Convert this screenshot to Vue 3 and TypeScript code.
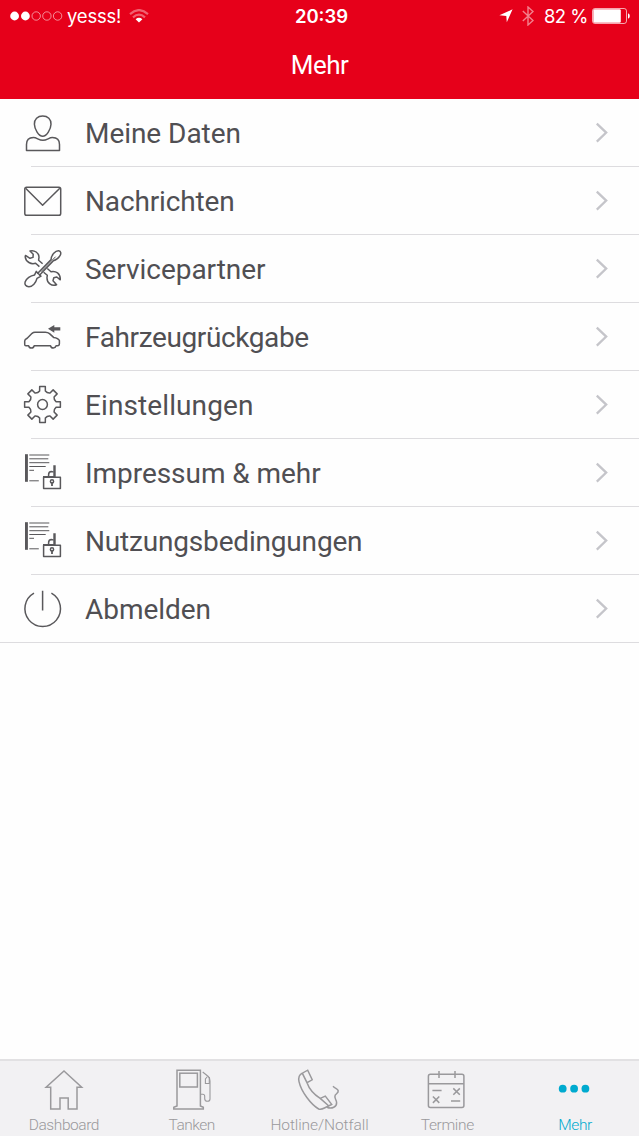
<script setup lang="ts">
interface MenuItem {
  label: string
  icon: 'user' | 'mail' | 'tools' | 'car' | 'gear' | 'legal' | 'power'
  tracking: number
}

interface Tab {
  label: string
  icon: 'home' | 'fuel' | 'phone' | 'calendar' | 'more'
  tracking: number
  active?: boolean
}

const items: MenuItem[] = [
  { label: 'Meine Daten', icon: 'user', tracking: -0.05 },
  { label: 'Nachrichten', icon: 'mail', tracking: -0.15 },
  { label: 'Servicepartner', icon: 'tools', tracking: -0.05 },
  { label: 'Fahrzeugrückgabe', icon: 'car', tracking: -0.38 },
  { label: 'Einstellungen', icon: 'gear', tracking: 0.1 },
  { label: 'Impressum & mehr', icon: 'legal', tracking: -0.05 },
  { label: 'Nutzungsbedingungen', icon: 'legal', tracking: -0.18 },
  { label: 'Abmelden', icon: 'power', tracking: -0.05 },
]

const tabs: Tab[] = [
  { label: 'Dashboard', icon: 'home', tracking: -0.42 },
  { label: 'Tanken', icon: 'fuel', tracking: -0.5 },
  { label: 'Hotline/Notfall', icon: 'phone', tracking: -0.08 },
  { label: 'Termine', icon: 'calendar', tracking: -0.35 },
  { label: 'Mehr', icon: 'more', tracking: -0.4, active: true },
]

// Eight-toothed gear outline around (18.5, 18.5)
const gearPath = (() => {
  const c = 18.5
  const pt = (r: number, deg: number) => {
    const a = (deg * Math.PI) / 180
    return `${(c + r * Math.cos(a)).toFixed(2)} ${(c + r * Math.sin(a)).toFixed(2)}`
  }
  let d = ''
  for (let i = 0; i < 8; i++) {
    const m = i * 45
    d += `${i ? 'L' : 'M'}${pt(13.8, m - 12)}L${pt(18.1, m - 9)}L${pt(18.1, m + 9)}L${pt(13.8, m + 12)}Q${pt(12.2, m + 22.5)} ${pt(13.8, m + 33)}`
  }
  return d + 'Z'
})()
</script>

<template>
  <div class="screen">
    <header class="header">
      <div class="status">
        <div class="status-left">
          <svg class="signal" width="54" height="12" viewBox="0 0 54 12">
            <circle cx="4.6" cy="6" r="4.4" fill="#fff" />
            <circle cx="15.4" cy="6" r="4.4" fill="#fff" />
            <g fill="none" stroke="#fff" stroke-opacity=".6" stroke-width=".9">
              <circle cx="26.2" cy="6" r="4.2" />
              <circle cx="36.9" cy="6" r="4.2" />
              <circle cx="47.6" cy="6" r="4.2" />
            </g>
          </svg>
          <span class="carrier">yesss!</span>
          <svg class="wifi" width="20" height="14" viewBox="0 0 20 14" fill="none">
            <path d="M1 5.1Q10 -3 19 5.1" stroke="#fff" stroke-opacity=".38" stroke-width="2.1" />
            <path d="M4 8.4Q10 3 16 8.4" stroke="#fff" stroke-opacity=".38" stroke-width="2.1" />
            <path d="M6.6 10.2Q10 7.4 13.4 10.2L10 13.6Z" fill="#fff" />
          </svg>
        </div>
        <div class="clock">20:39</div>
        <div class="status-right">
          <svg class="arrow" width="14" height="14" viewBox="0 0 14 14">
            <path d="M13.6 .3L7.8 13.2L7.3 6.9L.4 6.3Z" fill="#fff" />
          </svg>
          <svg class="bluetooth" width="12" height="20" viewBox="0 0 12 20">
            <path d="M.8 5.1L11 14.5L6 19V1L11 5.5L.8 14.9" fill="none" stroke="#fff" stroke-opacity=".5" stroke-width="1.4" />
          </svg>
          <span class="percent">82 %</span>
          <svg class="battery" width="38" height="16" viewBox="0 0 38 16">
            <rect x=".5" y=".5" width="34" height="15" rx="2.4" fill="none" stroke="#fff" stroke-opacity=".65" />
            <rect x="1.3" y="1.3" width="27.5" height="13.4" rx="1.2" fill="#fff" />
            <path d="M36 5.3Q37.8 6 37.8 8T36 10.7Z" fill="#fff" />
          </svg>
        </div>
      </div>
      <h1 class="title">Mehr</h1>
    </header>

    <main class="content">
      <ul class="menu">
        <li v-for="item in items" :key="item.label" class="row">
          <svg class="row-icon" width="38" height="38" viewBox="0 0 38 38">
            <g v-if="item.icon === 'user'">
              <path d="M18.7 2C23.8 2 27.2 5.3 27 10.2C26.8 15.2 22.8 22.3 18.7 22.3C14.6 22.3 10.6 15.2 10.4 10.2C10.2 5.3 13.6 2 18.7 2Z" />
              <path d="M2.5 36.6V30.5C2.5 26 5 23.5 9.4 23.5C13 23.5 14.6 26.3 18.9 26.3C23.2 26.3 24.8 23.5 28.4 23.5C32.8 23.5 35.5 26 35.5 30.5V36.6Z" />
            </g>
            <g v-else-if="item.icon === 'mail'">
              <rect x=".8" y="5.3" width="35.9" height="28" rx="1.8" />
              <path d="M1.6 6.2L18.6 23.2L35.8 6.2" />
            </g>
            <g v-else-if="item.icon === 'tools'">
              <path d="M15.4 16.6L11.6 13.2C7 14.7 1.9 12 1.2 6.8L1.5 5.4L6 8.3L9 7.4L9.2 4.3L6 1C10.5-.4 14.9 3 15 7.3L14.6 10.2L18.6 13.7M23.3 18.5L27 21.7C31.8 20.6 36.5 23.4 36.3 29.8L32.8 27L29.8 27.7L29 30.7L32.6 34.8C27.6 36.5 22.8 33.2 23 27.5L23.3 25.3L19.6 22.2" />
              <path d="M13.3 23.8L27.1 9.4C27.3 5 31.5.5 34.6.7C37.2 1 37.3 3.8 35.7 6.2C34 9 31.5 10.2 29.4 10.7L15.2 25.4" />
              <path d="M12.3 21.4L17 26.2L13 28.4C12 32.6 8.5 36.8 4.8 36.7C2 36.6.3 34.5 1.1 32C2.2 28.4 6.6 25.6 10.6 24.9Z" />
              <path d="M17 21.7L31.6 6.7" stroke-width="1" />
            </g>
            <g v-else-if="item.icon === 'car'">
              <path d="M4.6 27.7H1.9Q.7 27.7.7 26.4V23Q.7 21.4 3.2 20.2L8.1 15.3Q9.2 14.4 11 14.3H21.2Q24 14.4 25.5 15.6L29.6 19.4Q34.3 20 35.4 22.5V25.4Q35.4 27.7 33.5 27.7H32.1Q31.4 30 29.3 30Q27.1 30 26.5 27.7H10.2Q9.6 30 7.4 30Q5.2 30 4.6 27.7Z" />
              <path d="M24 10.8L30.3 6.9V9.2H36.3V12.4H30.3V14.7Z" class="solid" />
            </g>
            <g v-else-if="item.icon === 'gear'">
              <path :d="gearPath" />
              <circle cx="18.5" cy="18.5" r="4.9" />
            </g>
            <g v-else-if="item.icon === 'legal'">
              <rect x="1" y=".2" width="2.9" height="27.6" class="solid" />
              <path d="M5.3 1H25.3M5.3 4.8H24.3M5.3 8.7H25.3M5.3 12.5H21.7M5.3 16.3H10M5.3 26.8H14.8" stroke-width="1" />
              <rect x="19.6" y="23.2" width="16.8" height="11.2" />
              <path d="M24.6 22.8V20.8Q24.6 17.6 27.4 17.5Q29.3 17.5 29.4 18.4" />
              <path d="M29.3 11.2H31.7V23H19V22H29.3Z" class="solid" />
              <circle cx="28" cy="27.4" r="1.6" />
              <path d="M28 28V32" stroke-width="1.8" />
            </g>
            <g v-else>
              <path d="M10 3.2A17.8 17.8 0 1 0 27.4 3.2M18.6.8V20.4" />
            </g>
          </svg>
          <span class="label" :style="{ letterSpacing: item.tracking + 'px' }">{{ item.label }}</span>
          <svg class="chevron" width="14" height="22" viewBox="0 0 14 22">
            <path d="M1.8 1.6L11.2 10.6L1.8 19.6" fill="none" stroke="#c5c5ca" stroke-width="2.3" />
          </svg>
        </li>
      </ul>
    </main>

    <nav class="tabs">
      <div v-for="tab in tabs" :key="tab.label" class="tab" :class="{ active: tab.active }">
        <svg class="tab-icon" width="44" height="44" viewBox="0 0 44 44">
          <path v-if="tab.icon === 'home'" d="M22 3L39.7 19.3H35V41H26.2V30H18V41H8.7V19.3H4.1Z" />
          <g v-else-if="tab.icon === 'fuel'">
            <path d="M7 38V2.2H30.4V38L33.3 39.3V41H3.8V39.3Z" />
            <rect x="9.8" y="5.2" width="17.6" height="13.8" />
            <path d="M32.7 4L38.3 8.5Q40 10 40 13V31Q40 33.3 37.4 33.3Q34.7 33.3 34.7 30.5V28.2Q34.7 26.2 32.7 26.2H30.4" stroke-width="1.1" />
            <path d="M37.5 8.5L35.4 11V15.5H39.3V9" stroke-width="1.1" />
          </g>
          <g v-else-if="tab.icon === 'phone'">
            <path d="M10.7 2.2L15.2 11.8L10 14.7L5.3 5.2ZM5.3 5.2C2 6.8 1.2 9.5 2 13.6C4.4 24 14 36.5 21.7 41Q24.2 41.7 27.4 40L34.7 36.4L28.3 28.1L23.2 30.4L31.6 37.8M10 14.7C12 20.5 18 27 23.2 30.4" />
            <path d="M30 39.2C34.8 41.5 40 38.5 39.6 34.5C39.4 31.8 36.8 29.7 38.2 27.2C39 25.7 41.7 25 41.2 22.7C40.7 20.8 38.7 21 36 18.2" />
          </g>
          <g v-else-if="tab.icon === 'calendar'">
            <rect x="3.4" y="6.2" width="35.5" height="33.2" rx="2" />
            <path d="M3.4 15.8H38.9M14 3V10M30 3V10M7.4 22.4H16.6M26 33.1H35.2M28.3 20.4L34.8 26.8M34.8 20.4L28.3 26.8M7.9 28.5L14.3 34.9M14.3 28.5L7.9 34.9" />
          </g>
          <g v-else class="dots">
            <circle cx="9.7" cy="20.7" r="3.9" />
            <circle cx="21.1" cy="20.7" r="3.9" />
            <circle cx="32.4" cy="20.7" r="3.9" />
          </g>
        </svg>
        <span class="tab-label" :style="{ letterSpacing: tab.tracking + 'px' }">{{ tab.label }}</span>
      </div>
    </nav>
  </div>
</template>

<style>
body {
  margin: 0;
}
</style>

<style scoped>
.screen {
  display: flex;
  flex-direction: column;
  width: 639px;
  height: 1136px;
  overflow: hidden;
  background: #fefefe;
  font-family: Roboto, "Noto Sans", sans-serif;
}

.header {
  flex: none;
  height: 99px;
  background: #e6001a;
  color: #fff;
}

.status {
  display: grid;
  grid-template-columns: 1fr auto 1fr;
  align-items: center;
  height: 32px;
  padding: 0 9px 0 10px;
  font: 400 18.5px/32px Inter, "Liberation Sans", sans-serif;
}

.status-left,
.status-right {
  display: flex;
  align-items: center;
}

.status-right {
  justify-content: flex-end;
}

.carrier {
  margin-left: 3px;
  letter-spacing: -0.2px;
}

.wifi {
  margin-left: 8px;
}

.clock {
  margin-left: 3px;
  font-weight: 600;
}

.bluetooth {
  margin-left: 9px;
}

.percent {
  margin: 0 4px 0 10px;
  letter-spacing: -0.5px;
}

.title {
  margin: 0;
  font-size: 26px;
  font-weight: 400;
  letter-spacing: -0.5px;
  line-height: 67px;
  text-align: center;
}

.content {
  flex: 1;
}

.menu {
  margin: 0;
  padding: 0;
  list-style: none;
  border-bottom: 1px solid #dddcdf;
}

.row {
  display: flex;
  align-items: center;
  height: 68px;
  padding: 0 30px 0 24px;
  background: linear-gradient(#dddcdf, #dddcdf) 31px 100% / 100% 1px no-repeat;
}

.row:last-child {
  height: 67px;
  box-sizing: border-box;
  background: none;
}

.row-icon {
  flex: none;
  overflow: visible;
  fill: none;
  stroke: #59585b;
  stroke-width: 1.5;
  stroke-linejoin: round;
}

.row-icon .solid {
  fill: #59585b;
  stroke: none;
}

.label {
  flex: 1;
  margin-left: 23px;
  padding-top: 2px;
  color: #504f53;
  font-size: 28px;
  line-height: 40px;
  white-space: nowrap;
}

.tabs {
  display: grid;
  grid-template-columns: repeat(5, 1fr);
  flex: none;
  box-sizing: border-box;
  height: 77px;
  border-top: 2px solid #e2e1e3;
  background: #f2f1f3;
}

.tab {
  display: flex;
  flex-direction: column;
  align-items: center;
  padding-top: 7px;
  color: #9a999c;
}

.tab-icon {
  flex: none;
  overflow: visible;
  fill: none;
  stroke: currentColor;
  stroke-width: 1.5;
}

.tab-icon .dots {
  fill: currentColor;
  stroke: none;
}

.tab-label {
  margin-top: 2px;
  font-size: 15.5px;
  font-weight: 300;
  line-height: 22px;
  white-space: nowrap;
}

.active {
  color: #00aacf;
}
</style>
